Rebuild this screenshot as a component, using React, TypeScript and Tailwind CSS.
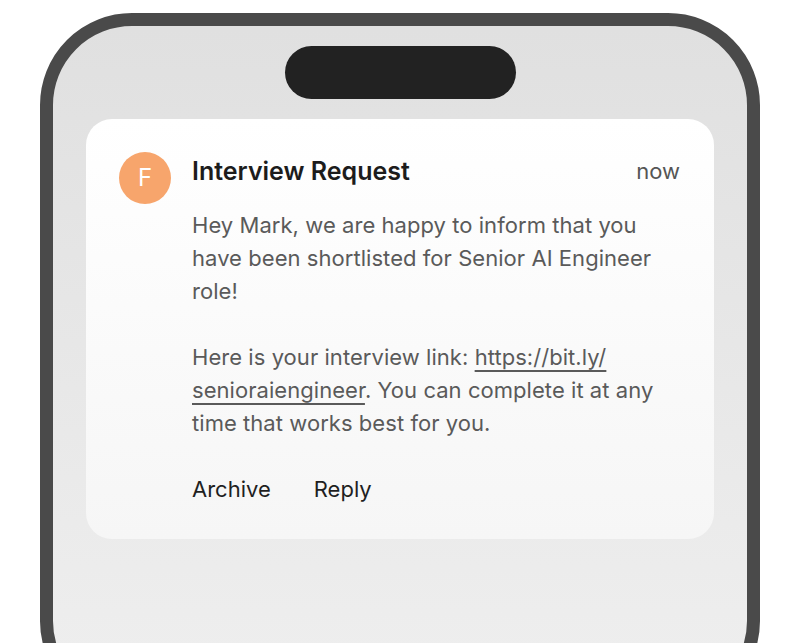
export default function App() {
  return (
    <div className="w-[800px] h-[643px] overflow-hidden bg-white font-['Inter',sans-serif]">
      <div className="ml-[40px] mt-[13px] w-[720px] h-[700px] rounded-[92px] border-[13px] border-[#4a4a4a] bg-gradient-to-b from-[#e0e0e0] to-[#efefef] flex flex-col items-center">
        <div className="mt-[20px] w-[231px] h-[53px] rounded-full bg-[#222222]" />
        <div className="mt-[20px] w-[628px] rounded-[26px] bg-gradient-to-b from-white to-[#f6f6f6] pl-[33px] pr-[34px] pt-[33px] pb-[34px] flex gap-[21px]">
          <div className="w-[52px] h-[52px] shrink-0 rounded-full bg-[#f7a56c] flex items-center justify-center text-white text-[24px]">
            F
          </div>
          <div className="flex-1 flex flex-col">
            <div className="flex items-start justify-between mt-[3px]">
              <h2 className="text-[25px] leading-[32px] font-semibold text-[#1c1c1c]">Interview Request</h2>
              <span className="text-[22px] leading-[32px] text-[#555555]">now</span>
            </div>
            <div className="mt-[22px] text-[22px] tracking-[0.05px] leading-[33px] text-[#5a5a5a]">
              <p>Hey Mark, we are happy to inform that you have been shortlisted for Senior AI Engineer role!</p>
              <p className="mt-[33px]">
                Here is your interview link:{" "}
                <a className="underline underline-offset-[5px] decoration-[1.5px]" href="#">
                  https://bit.ly/<wbr />senioraiengineer
                </a>
                . You can complete it at any time that works best for you.
              </p>
            </div>
            <div className="mt-[33px] flex gap-[43px] text-[22px] leading-[32px] text-[#1f1f1f]">
              <span>Archive</span>
              <span>Reply</span>
            </div>
          </div>
        </div>
      </div>
    </div>
  );
}
